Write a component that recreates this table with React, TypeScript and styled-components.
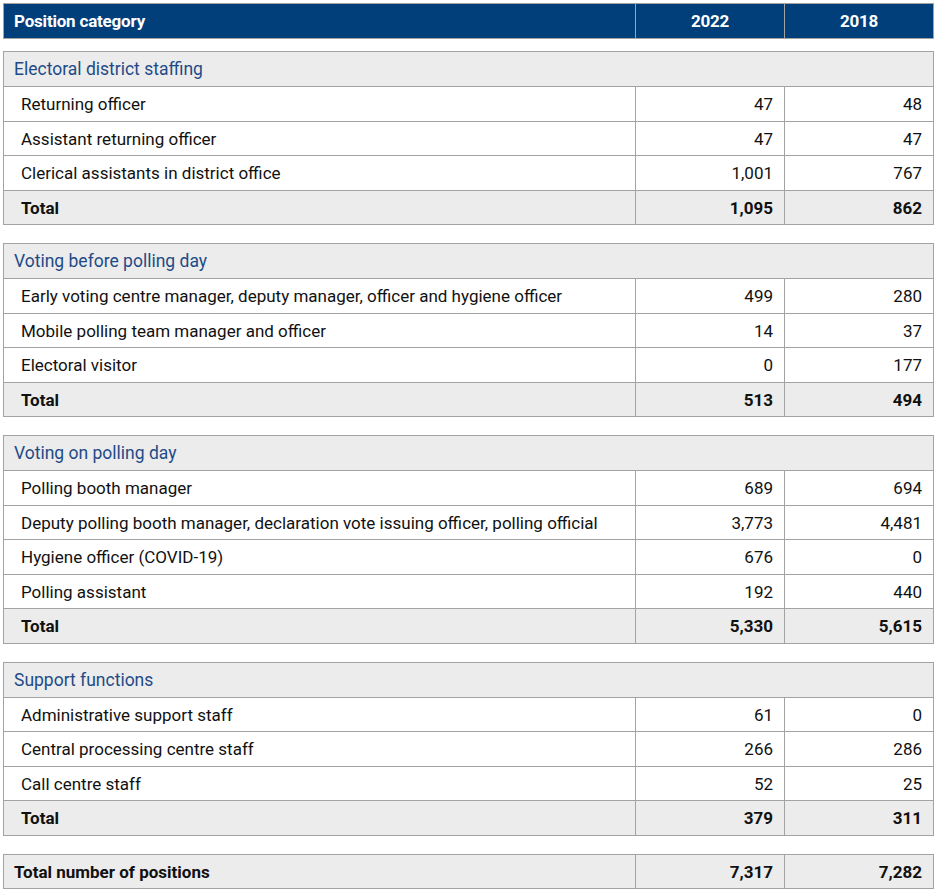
import React from "react"
import styled, { createGlobalStyle } from "styled-components"

const GlobalStyle = createGlobalStyle`
    html, body {
        margin: 0;
        padding: 0;
        background: #ffffff;
    }
    body {
        font-family: Roboto, 'Liberation Sans', sans-serif;
    }
`

const Page = styled.div`
    width: 931px;
    padding: 3px 3px 0 3px;
    display: flex;
    flex-direction: column;
    gap: 12px;
`

const Sections = styled.div`
    display: flex;
    flex-direction: column;
    gap: 18px;
`

const Table = styled.table`
    width: 931px;
    border-collapse: collapse;
    table-layout: fixed;
    font-size: 17px;
    line-height: 18px;
    color: #111111;

    col.label { width: 632px; }
    col.num { width: 149px; }
`

const HeadCell = styled.th<{ $num?: boolean }>`
    background: #003f7a;
    color: #ffffff;
    font-weight: 700;
    font-size: 17px;
    height: 34px;
    padding: 0 ${p => p.$num ? '0' : '10px'};
    text-align: ${p => p.$num ? 'center' : 'left'};
    border: 1px solid #a3a3a3;
    letter-spacing: -0.2px;
`

const GroupCell = styled.td`
    background: #ececec;
    color: #1e4b87;
    font-size: 17.5px;
    height: 34px;
    padding: 0 10px;
    border: 1px solid #a3a3a3;
`

const Cell = styled.td<{ $num?: boolean; $total?: boolean }>`
    background: ${p => p.$total ? '#ececec' : '#ffffff'};
    font-weight: ${p => p.$total ? 700 : 400};
    height: 32.5px;
    padding: ${p => p.$num ? '1px 11px 0 0' : '1px 0 0 17px'};
    text-align: ${p => p.$num ? 'right' : 'left'};
    border: 1px solid #a3a3a3;
    white-space: nowrap;
`

const GrandCell = styled(Cell)`
    padding-left: 10px;
`

const Cols = () => (
    <colgroup>
        <col className="label" />
        <col className="num" />
        <col className="num" />
    </colgroup>
)

type Row = [string, string, string]

const groups: { title: string; rows: Row[]; total: [string, string] }[] = [
    {
        title: 'Electoral district staffing',
        rows: [
            ['Returning officer', '47', '48'],
            ['Assistant returning officer', '47', '47'],
            ['Clerical assistants in district office', '1,001', '767'],
        ],
        total: ['1,095', '862'],
    },
    {
        title: 'Voting before polling day',
        rows: [
            ['Early voting centre manager, deputy manager, officer and hygiene officer', '499', '280'],
            ['Mobile polling team manager and officer', '14', '37'],
            ['Electoral visitor', '0', '177'],
        ],
        total: ['513', '494'],
    },
    {
        title: 'Voting on polling day',
        rows: [
            ['Polling booth manager', '689', '694'],
            ['Deputy polling booth manager, declaration vote issuing officer, polling official', '3,773', '4,481'],
            ['Hygiene officer (COVID-19)', '676', '0'],
            ['Polling assistant', '192', '440'],
        ],
        total: ['5,330', '5,615'],
    },
    {
        title: 'Support functions',
        rows: [
            ['Administrative support staff', '61', '0'],
            ['Central processing centre staff', '266', '286'],
            ['Call centre staff', '52', '25'],
        ],
        total: ['379', '311'],
    },
]

const App = () => {
    return (
        <>
            <GlobalStyle />
            <Page>
                <Table>
                    <Cols />
                    <thead>
                        <tr>
                            <HeadCell>Position category</HeadCell>
                            <HeadCell $num>2022</HeadCell>
                            <HeadCell $num>2018</HeadCell>
                        </tr>
                    </thead>
                </Table>

                <Sections>
                    {groups.map(g => (
                        <Table key={g.title}>
                            <Cols />
                            <tbody>
                                <tr>
                                    <GroupCell colSpan={3}>{g.title}</GroupCell>
                                </tr>
                                {g.rows.map(r => (
                                    <tr key={r[0]}>
                                        <Cell>{r[0]}</Cell>
                                        <Cell $num>{r[1]}</Cell>
                                        <Cell $num>{r[2]}</Cell>
                                    </tr>
                                ))}
                                <tr>
                                    <Cell $total>Total</Cell>
                                    <Cell $total $num>{g.total[0]}</Cell>
                                    <Cell $total $num>{g.total[1]}</Cell>
                                </tr>
                            </tbody>
                        </Table>
                    ))}

                    <Table>
                        <Cols />
                        <tbody>
                            <tr>
                                <GrandCell $total>Total number of positions</GrandCell>
                                <Cell $total $num>7,317</Cell>
                                <Cell $total $num>7,282</Cell>
                            </tr>
                        </tbody>
                    </Table>
                </Sections>
            </Page>
        </>
    )
}

export default App
